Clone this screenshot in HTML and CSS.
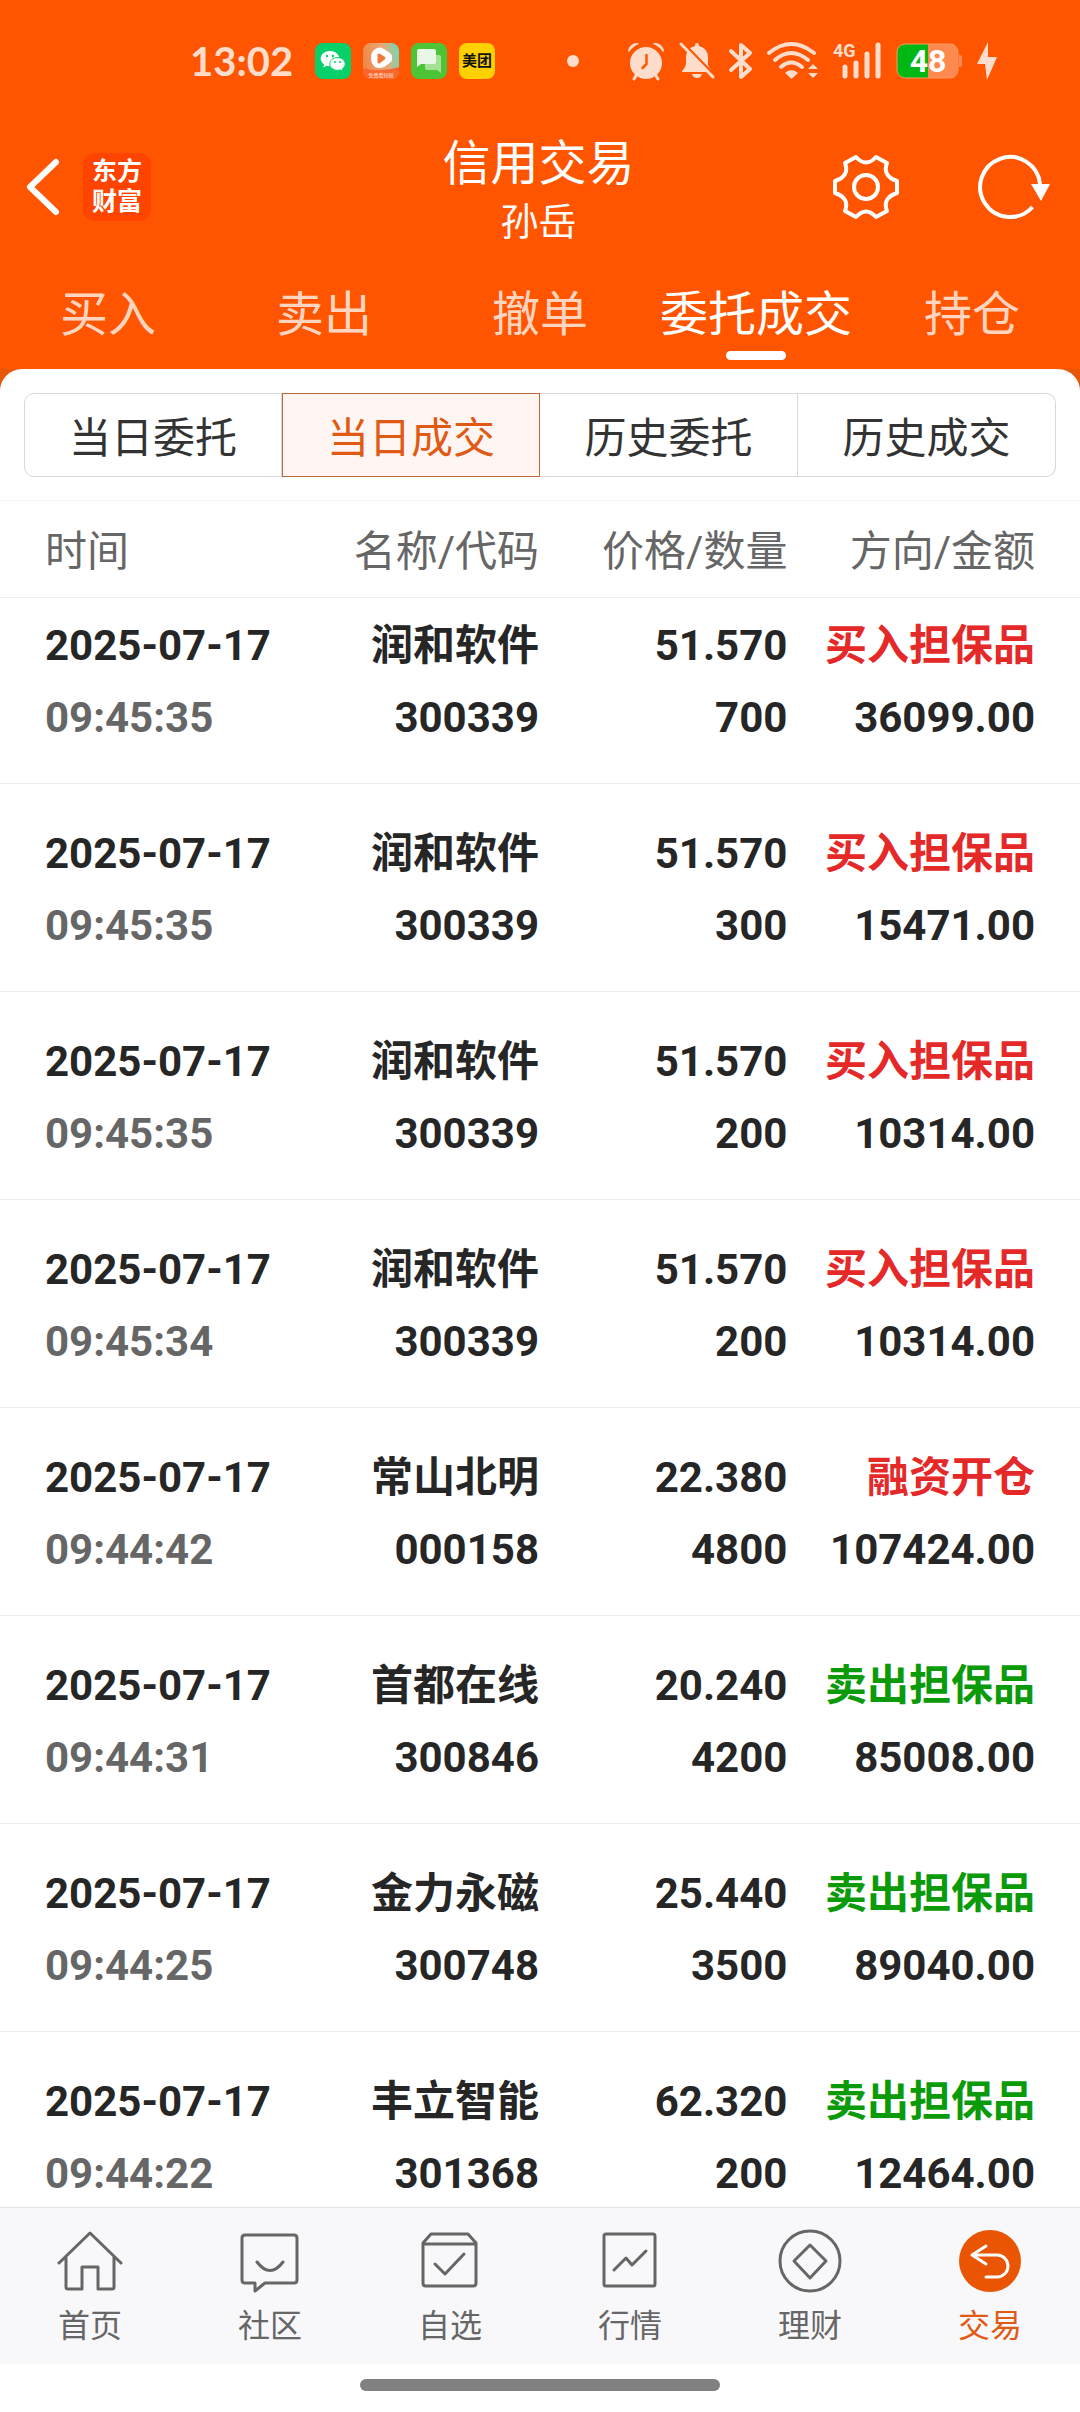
FILE: index.html
```html
<!DOCTYPE html>
<html lang="zh-CN">
<head>
  <meta charset="UTF-8">
  <meta name="viewport" content="width=device-width, initial-scale=1.0">
  <title>信用交易</title>
  <link rel="stylesheet" href="styles.css">
</head>
<body>
  <div class="status-bar">
    <span class="clock">13:02</span>
    <div class="app-icons">
      <svg width="36" height="36" viewBox="0 0 36 36">
        <rect width="36" height="36" rx="8" fill="#07cf6a"/>
        <path d="M15 8c-5.200 0-9.300 3.400-9.300 7.600 0 2.400 1.300 4.500 3.400 5.900l-.8 2.900 3.200-1.700c1.100.3 2.300.5 3.500.5 5.100 0 9.300-3.400 9.300-7.600S20.100 8 15 8z" fill="#fff"/>
        <path d="M22.500 14.500c-4.300 0-7.700 2.900-7.700 6.400s3.400 6.400 7.700 6.400c1 0 2-.2 2.800-.4l2.800 1.400-.7-2.500c1.700-1.200 2.800-2.900 2.800-4.900 0-3.500-3.400-6.400-7.700-6.400z" fill="#fff" stroke="#07cf6a"/>
        <g fill="#07cf6a"><circle cx="12" cy="13" r="1.200"/><circle cx="18" cy="13" r="1.200"/><circle cx="20" cy="19" r="1"/><circle cx="25" cy="19" r="1"/></g>
      </svg>
      <svg width="36" height="36" viewBox="0 0 36 36">
        <defs>
          <linearGradient id="video-bg" x1="0" y1="0.200" x2="1" y2="0">
            <stop offset="0" stop-color="#f08a4b"/>
            <stop offset="0.550" stop-color="#e8a878"/>
            <stop offset="1" stop-color="#5fe0c0"/>
          </linearGradient>
        </defs>
        <rect width="36" height="36" rx="8" fill="url(#video-bg)"/>
        <path d="M0 25q18 5 36-1v4a8 8 0 0 1-8 8H8a8 8 0 0 1-8-8z" fill="#f8662f"/>
        <path d="M12 6q5-3 9 0l6 4q4 4 1 9l-7 5q-5 2-9 0-4-3-4-9 0-6 4-9z" fill="#fff"/>
        <path d="M16 12l5 3-5 4z" fill="#f07a3c" stroke="#f07a3c" stroke-width="3" stroke-linejoin="round"/>
        <text class="video-caption" x="18" y="34" text-anchor="middle">免费看短剧</text>
      </svg>
      <svg width="36" height="36" viewBox="0 0 36 36">
        <rect width="36" height="36" rx="8" fill="#4cc435"/>
        <path d="M14 12h14q2 0 2 2v16l-4-3H16q-2 0-2-2z" fill="#a4e196"/>
        <path d="M8 6h15q2 0 2 2v11q0 2-2 2H10l-4 3V8q0-2 2-2z" fill="#e9f8e6"/>
      </svg>
      <svg width="36" height="36" viewBox="0 0 36 36">
        <rect width="36" height="36" rx="8" fill="#ffd100"/>
        <text class="meituan" x="18" y="23" text-anchor="middle">美团</text>
      </svg>
    </div>
    <span class="dot"></span>
    <div class="system-icons">
      <!-- alarm -->
      <svg width="36" height="38" viewBox="0 0 36 38">
        <circle cx="18" cy="21" r="16" fill="#ffddcc"/>
        <path d="M9 32l-3 5M27 32l3 5" stroke="#ffddcc" stroke-width="3" stroke-linecap="round"/>
        <path d="M0 9a9 9 0 0 1 10-8l1 1A20 20 0 0 0 1 10zM36 9a9 9 0 0 0-10-8l-1 1a20 20 0 0 1 10 8z" fill="#ffddcc"/>
        <path d="M18.500 13v9l-4 4" fill="none" stroke="#ff5500" stroke-width="2.500" stroke-linecap="round"/>
      </svg>
      <!-- muted bell -->
      <svg width="35" height="38" viewBox="0 0 35 38">
        <path d="M18 1q2 0 2 3 9 2 9 12v6q0 3 4 7v1H3v-1q4-4 4-8v-5Q7 6 16 4q0-3 2-3zM13 32h10q-1 4-5 4t-5-4z" fill="#ffddcc"/>
        <path d="M3 0l33 34" stroke="#ff5500" stroke-width="3"/>
        <path d="M2 2l32 33" stroke="#ffddcc" stroke-width="3" stroke-linecap="round"/>
      </svg>
      <!-- bluetooth -->
      <svg width="23" height="38" viewBox="0 0 23 38">
        <path d="M2 9l19 18-9 8V3l9 8L2 28" fill="none" stroke="#ffddcc" stroke-width="4" stroke-linecap="round" stroke-linejoin="round"/>
      </svg>
      <!-- wifi -->
      <svg width="51" height="38" viewBox="0 0 51 38">
        <g fill="none" stroke="#ffddcc" stroke-width="4" stroke-linecap="round">
          <path d="M2 11Q24-7 47 11"/>
          <path d="M8 18Q24 4 41 18"/>
          <path d="M14 25q10-9 21 0"/>
        </g>
        <path d="M18 31q6-6 13 0l-6.500 6zM41 27l5-5 5 5zM41 31h10l-5 5z" fill="#ffddcc"/>
      </svg>
      <!-- signal -->
      <svg width="48" height="38" viewBox="0 0 48 38">
        <text class="network" x="0" y="15">4G</text>
        <path d="M12 25v9M23 21v13M34 12v22M45 3v31" stroke="#ffddcc" stroke-width="5" stroke-linecap="round"/>
      </svg>
      <!-- battery -->
      <svg width="66" height="38" viewBox="0 0 66 38">
        <path d="M9 2h23v34H9a8 8 0 0 1-8-8V10a8 8 0 0 1 8-8z" fill="#00b814"/>
        <path d="M32 2h22a8 8 0 0 1 8 8v18a8 8 0 0 1-8 8H32zM63 13q3 0 3 2v8q0 2-3 2z" fill="#ff8a50"/>
        <rect x="1" y="2" width="61" height="34" rx="8" fill="none" stroke="#ff9a66"/>
        <text class="battery-level" x="32" y="30" text-anchor="middle">48</text>
      </svg>
      <!-- charging -->
      <svg width="20" height="38" viewBox="0 0 20 38">
        <path d="M11 0L0 22h8l2 16 10-23h-9z" fill="#ffddcc"/>
      </svg>
    </div>
  </div>

  <header class="header">
    <div class="header-left">
      <button class="icon-btn" aria-label="返回">
        <svg width="33" height="56" viewBox="0 0 33 56">
          <path d="M30 3L4 28l26 25" fill="none" stroke="#fff" stroke-width="6" stroke-linecap="round" stroke-linejoin="round"/>
        </svg>
      </button>
      <div class="logo">东方<br>财富</div>
    </div>
    <div class="header-title">
      <h1>信用交易</h1>
      <p>孙岳</p>
    </div>
    <div class="header-right">
      <button class="icon-btn" aria-label="设置">
        <svg width="66" height="66" viewBox="0 0 66 66">
          <path d="M23 3Q33 14 43 3L54 9Q49 22 64 27V39Q49 44 54 57L43 63Q33 52 23 63L12 57Q17 44 2 39V27Q17 22 12 9Z" fill="none" stroke="#fff" stroke-width="4" stroke-linejoin="round"/>
          <circle cx="33" cy="33" r="12" fill="none" stroke="#fff" stroke-width="4"/>
        </svg>
      </button>
      <button class="icon-btn" aria-label="刷新">
        <svg width="72" height="66" viewBox="0 0 72 66">
          <path d="M61 30A30 30 0 1 0 53.500 53" fill="none" stroke="#fff" stroke-width="4"/>
          <path d="M52 30h19l-9 17z" fill="#fff"/>
        </svg>
      </button>
    </div>
  </header>

  <nav class="tabs">
    <a href="#">买入</a>
    <a href="#">卖出</a>
    <a href="#">撤单</a>
    <a href="#" class="active">委托成交</a>
    <a href="#">持仓</a>
  </nav>

  <main class="content">
    <div class="sheet">
      <div class="segment">
        <button>当日委托</button>
        <button class="active">当日成交</button>
        <button>历史委托</button>
        <button>历史成交</button>
      </div>
      <table class="deals">
        <thead>
          <tr>
            <th>时间</th>
            <th>名称/代码</th>
            <th>价格/数量</th>
            <th>方向/金额</th>
          </tr>
        </thead>
        <tbody>
          <tr>
            <td>2025-07-17<br><span class="time">09:45:35</span></td>
            <td>润和软件<br>300339</td>
            <td>51.570<br>700</td>
            <td><span class="buy">买入担保品</span><br>36099.00</td>
          </tr>
          <tr>
            <td>2025-07-17<br><span class="time">09:45:35</span></td>
            <td>润和软件<br>300339</td>
            <td>51.570<br>300</td>
            <td><span class="buy">买入担保品</span><br>15471.00</td>
          </tr>
          <tr>
            <td>2025-07-17<br><span class="time">09:45:35</span></td>
            <td>润和软件<br>300339</td>
            <td>51.570<br>200</td>
            <td><span class="buy">买入担保品</span><br>10314.00</td>
          </tr>
          <tr>
            <td>2025-07-17<br><span class="time">09:45:34</span></td>
            <td>润和软件<br>300339</td>
            <td>51.570<br>200</td>
            <td><span class="buy">买入担保品</span><br>10314.00</td>
          </tr>
          <tr>
            <td>2025-07-17<br><span class="time">09:44:42</span></td>
            <td>常山北明<br>000158</td>
            <td>22.380<br>4800</td>
            <td><span class="buy">融资开仓</span><br>107424.00</td>
          </tr>
          <tr>
            <td>2025-07-17<br><span class="time">09:44:31</span></td>
            <td>首都在线<br>300846</td>
            <td>20.240<br>4200</td>
            <td><span class="sell">卖出担保品</span><br>85008.00</td>
          </tr>
          <tr>
            <td>2025-07-17<br><span class="time">09:44:25</span></td>
            <td>金力永磁<br>300748</td>
            <td>25.440<br>3500</td>
            <td><span class="sell">卖出担保品</span><br>89040.00</td>
          </tr>
          <tr>
            <td>2025-07-17<br><span class="time">09:44:22</span></td>
            <td>丰立智能<br>301368</td>
            <td>62.320<br>200</td>
            <td><span class="sell">卖出担保品</span><br>12464.00</td>
          </tr>
        </tbody>
      </table>
    </div>
  </main>

  <nav class="bottom-nav">
    <a href="#">
      <svg class="nav-icon" viewBox="0 0 64 64">
        <path d="M1 34L32 4l31 30M8 28v30q0 2 2 2h14V38h16v22h14q2 0 2-2V28"/>
      </svg>
      首页
    </a>
    <a href="#">
      <svg class="nav-icon" viewBox="0 0 64 64">
        <path d="M7 6h49q3 0 3 3v42q0 3-3 3H27l-10 8v-8H7q-3 0-3-3V9q0-3 3-3zM19 33q13 17 26 0"/>
      </svg>
      社区
    </a>
    <a href="#">
      <svg class="nav-icon" viewBox="0 0 64 64">
        <path d="M5 14l8-9h37l8 9v40q0 3-3 3H8q-3 0-3-3zM5 15h53M17 35l10 10 19-20"/>
      </svg>
      自选
    </a>
    <a href="#">
      <svg class="nav-icon" viewBox="0 0 64 64">
        <rect x="6" y="5" width="51" height="52" rx="2"/>
        <path d="M16 41l12-12 6 7 14-14"/>
      </svg>
      行情
    </a>
    <a href="#">
      <svg class="nav-icon" viewBox="0 0 64 64">
        <circle cx="32" cy="32" r="30"/>
        <path d="M32 16l16 16-16 17-16-17z"/>
      </svg>
      理财
    </a>
    <a href="#" class="active">
      <svg class="nav-icon" viewBox="0 0 64 64">
        <circle cx="32" cy="32" r="31" fill="#ea5504" stroke="none"/>
        <path d="M28 17L14 26l14 9M14 26h25a11 11 0 0 1 0 22H28" stroke="#fff"/>
      </svg>
      交易
    </a>
  </nav>
  <div class="home-indicator"><span></span></div>
</body>
</html>
```

FILE: styles.css
```css
:root {
  --primary-color: #ff5500;
  --active-color: #e05a14;
  --status-color: #ffddcc;
  --text-color: #262626;
  --muted-color: #666666;
  --line-color: #ededed;
}

* {
  box-sizing: border-box;
}

body {
  display: flex;
  flex-direction: column;
  height: 100vh;
  margin: 0;
  background-color: #ffffff;
  color: var(--text-color);
  font-family: Roboto, "Noto Sans CJK SC", sans-serif;
}

a {
  color: inherit;
  text-decoration: none;
}

button {
  padding: 0;
  border: none;
  background: none;
  color: inherit;
  font: inherit;
  cursor: pointer;
}

svg {
  display: block;
  overflow: visible;
}

/* status bar */
.status-bar {
  display: flex;
  align-items: center;
  height: 122px;
  padding: 0 83px 0 190px;
  background-color: var(--primary-color);
  color: var(--status-color);
}

.clock {
  width: 125px;
  font-family: Lato, sans-serif;
  font-size: 40px;
  font-weight: bold;
}

.app-icons {
  display: flex;
  gap: 12px;
}

.dot {
  width: 12px;
  height: 12px;
  margin-left: 72px;
  border-radius: 50%;
  background-color: var(--status-color);
}

.system-icons {
  display: flex;
  gap: 15px;
  margin-left: auto;
}

.video-caption {
  fill: #ffe0d0;
  font-size: 5px;
}

.meituan {
  fill: #111111;
  font-size: 15px;
  font-weight: bold;
}

.network {
  fill: var(--status-color);
  font-size: 18px;
  font-weight: bold;
}

.battery-level {
  fill: #ffffff;
  font-size: 32px;
  font-weight: bold;
}

/* header */
.header {
  display: grid;
  grid-template-columns: 1fr auto 1fr;
  align-items: center;
  padding: 0 29px 0 26px;
  background-color: var(--primary-color);
  color: #ffffff;
}

.header-left {
  display: flex;
  align-items: center;
  gap: 24px;
}

.header-right {
  display: flex;
  align-items: center;
  justify-content: flex-end;
  gap: 80px;
}

.logo {
  width: 68px;
  height: 68px;
  padding-top: 4px;
  border-radius: 12px;
  background-color: #ff4400;
  font-size: 25px;
  font-weight: bold;
  line-height: 30px;
  text-align: center;
}

.header-title {
  padding-top: 12px;
  line-height: 59px;
  text-align: center;
}

.header-title h1 {
  margin: 0;
  font-size: 48px;
  font-weight: 400;
}

.header-title p {
  margin: 0;
  font-size: 38px;
  font-weight: 400;
}

/* top tabs */
.tabs {
  display: grid;
  grid-template-columns: repeat(5, 1fr);
  padding: 33px 0 9px;
  background-color: var(--primary-color);
  color: #ffd5c0;
  font-size: 48px;
  line-height: 60px;
}

.tabs a {
  display: flex;
  flex-direction: column;
  align-items: center;
  gap: 6px;
}

.tabs a::after {
  content: "";
  width: 60px;
  height: 9px;
  border-radius: 5px;
}

.tabs .active {
  color: #ffffff;
}

.tabs .active::after {
  background-color: #ffffff;
}

/* deals */
.content {
  flex: 1;
  min-height: 0;
  overflow: hidden;
  background-color: #e8560a;
}

.sheet {
  border-radius: 22px 22px 0 0;
  background-color: #ffffff;
}

.segment {
  display: grid;
  grid-template-columns: repeat(4, 1fr);
  padding: 24px 24px 23px;
  border-bottom: 1px solid #f5f5f5;
}

.segment button {
  height: 84px;
  padding-bottom: 2px;
  border: 1px solid #d8d8d8;
  border-left-width: 0;
  color: #333333;
  font-size: 42px;
}

.segment button:first-child {
  border-left-width: 1px;
  border-radius: 10px 0 0 10px;
}

.segment button:last-child {
  border-radius: 0 10px 10px 0;
}

.segment .active {
  border: 1px solid #b8683c;
  background-color: #fff6f3;
  color: var(--active-color);
}

.deals {
  width: 100%;
  table-layout: fixed;
  border-spacing: 0;
  font-size: 42px;
}

.deals th,
.deals td {
  padding: 34px 1px 29px 0;
  border-bottom: 1px solid var(--line-color);
  text-align: right;
  white-space: nowrap;
}

.deals th {
  width: 25%;
  height: 97px;
  padding-top: 0;
  padding-bottom: 3px;
  color: var(--muted-color);
  font-weight: 400;
}

.deals th:nth-child(3) {
  width: 23%;
}

.deals th:nth-child(4) {
  width: 27%;
}

.deals td {
  font-weight: bold;
  line-height: 72px;
}

.deals tbody tr:first-child td {
  padding-top: 12px;
}

.deals th:first-child,
.deals td:first-child {
  padding-left: 45px;
  text-align: left;
}

.deals th:last-child,
.deals td:last-child {
  padding-right: 45px;
}

.time {
  color: var(--muted-color);
}

.buy {
  color: #e52828;
}

.sell {
  color: #0a9a0a;
}

/* bottom navigation */
.bottom-nav {
  display: grid;
  grid-template-columns: repeat(6, 1fr);
  padding: 21px 0 14px;
  border-top: 1px solid #e2e2e4;
  background-color: #f8f8fa;
  color: var(--muted-color);
  font-size: 32px;
  line-height: 48px;
}

.bottom-nav a {
  display: flex;
  flex-direction: column;
  align-items: center;
  gap: 9px;
}

.bottom-nav .active {
  color: var(--active-color);
}

.nav-icon {
  width: 64px;
  height: 64px;
  fill: none;
  stroke: #666666;
  stroke-width: 3;
  stroke-linecap: round;
  stroke-linejoin: round;
}

.home-indicator {
  display: flex;
  justify-content: center;
  padding: 15px 0 21px;
}

.home-indicator span {
  width: 360px;
  height: 12px;
  border-radius: 6px;
  background-color: #808080;
}
```
